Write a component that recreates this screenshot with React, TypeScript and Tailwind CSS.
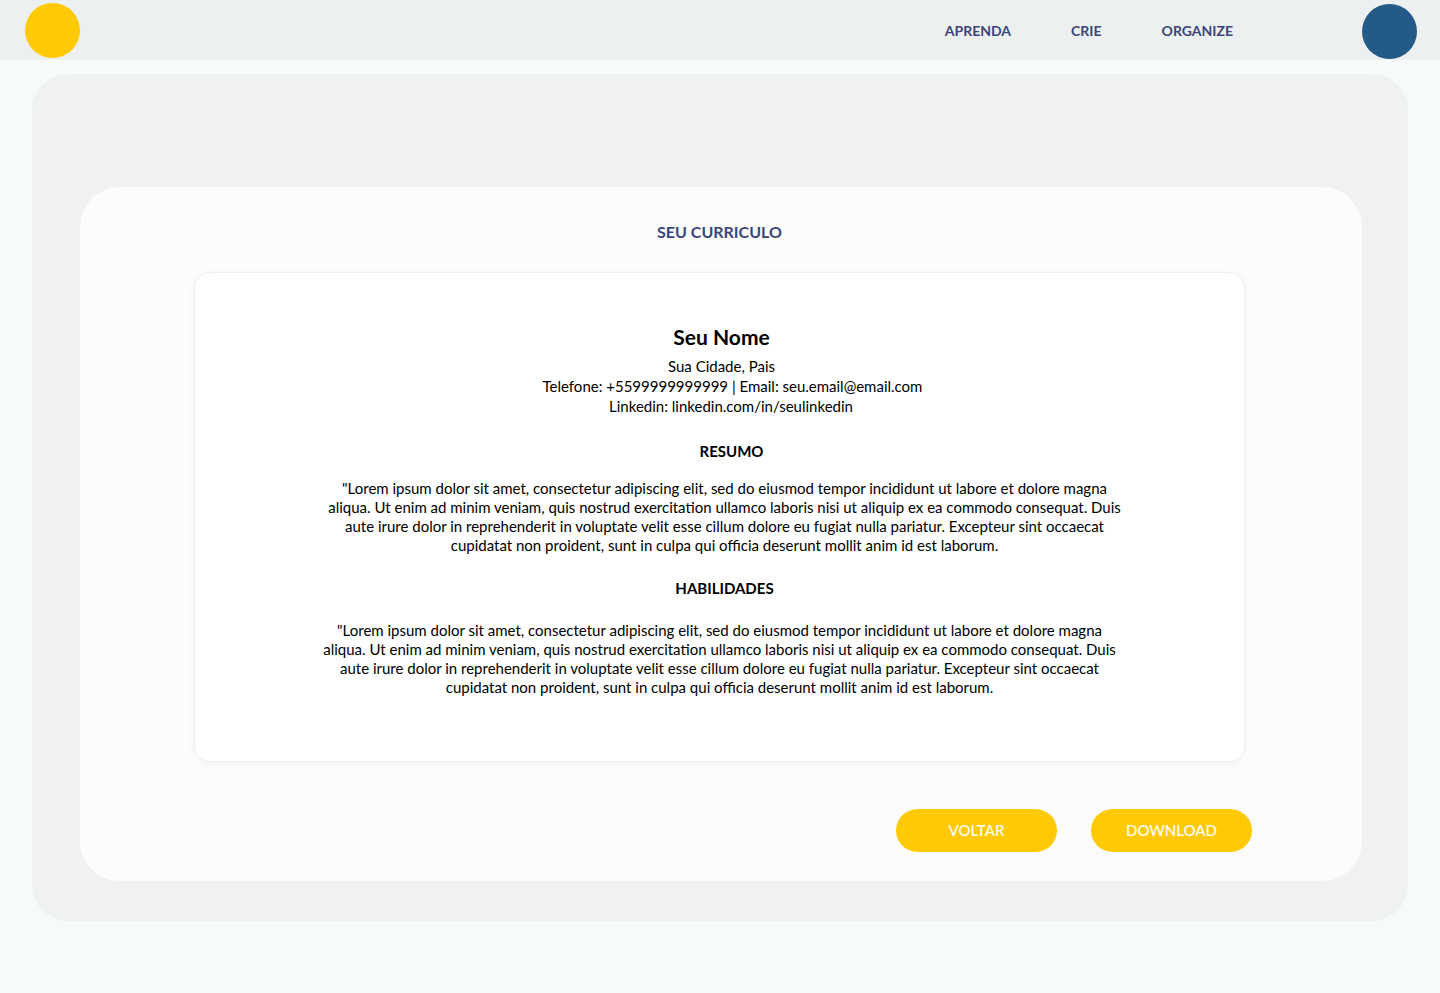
import React from 'react';

const lorem =
  '"Lorem ipsum dolor sit amet, consectetur adipiscing elit, sed do eiusmod tempor incididunt ut labore et dolore magna aliqua. Ut enim ad minim veniam, quis nostrud exercitation ullamco laboris nisi ut aliquip ex ea commodo consequat. Duis aute irure dolor in reprehenderit in voluptate velit esse cillum dolore eu fugiat nulla pariatur. Excepteur sint occaecat cupidatat non proident, sunt in culpa qui officia deserunt mollit anim id est laborum.';

const navLinks = ['APRENDA', 'CRIE', 'ORGANIZE'];

const App: React.FC = () => {
  return (
    <div className="min-h-screen bg-[#f6fafb] font-['Lato',sans-serif] pb-[73px]">
      {/* Header */}
      <header className="h-[60px] bg-[#edf0f1] flex items-center justify-between pl-[25px] pr-[23px]">
        <div className="w-[55px] h-[55px] rounded-full bg-[#ffc904]" />
        <div className="flex items-center">
          <nav className="flex items-center gap-[60px] mr-[129px]">
            {navLinks.map((link) => (
              <a key={link} href="#" className="text-[14px] font-bold text-[#3b4577]">
                {link}
              </a>
            ))}
          </nav>
          <div className="w-[55px] h-[55px] rounded-full bg-[#235a87] mt-[2px]" />
        </div>
      </header>

      {/* Outer panel */}
      <main className="mx-[32px] mt-[14px] bg-[#f0f2f2] rounded-[36px] pl-[48px] pr-[46px] pt-[113px] pb-[40px]">
        <section className="bg-[#fcfcfc] rounded-[40px] pl-[114px] pr-[117px] pt-[33px] pb-[29px]">
          <h1 className="text-center text-[16px] font-bold text-[#3b4577] mb-[28px]">SEU CURRICULO</h1>

          {/* Resume */}
          <div className="bg-white rounded-[16px] border border-[#eeeff3] shadow-[0_2px_10px_rgba(0,0,0,0.04)] pt-[51px] pb-[64px] text-black">
            <div className="text-center">
              <h2 className="text-[21px] font-bold leading-[26px] ml-[4px]">Seu Nome</h2>
              <p className="text-[15px] leading-[20px] mt-[6px] ml-[4px]">Sua Cidade, Pais</p>
              <p className="text-[15px] leading-[21px] ml-[26px]">Telefone: +5599999999999 | Email: seu.email@email.com</p>
              <p className="text-[15px] leading-[19px] ml-[23px]">Linkedin: linkedin.com/in/seulinkedin</p>
            </div>

            <h3 className="text-center text-[15px] font-bold mt-[24px] ml-[24px]">RESUMO</h3>
            <p className="text-center text-[15px] leading-[19px] max-w-[810px] mx-auto mt-[16px] pl-[10px]">{lorem}</p>

            <h3 className="text-center text-[15px] font-bold mt-[22px] ml-[10px]">HABILIDADES</h3>
            <p className="text-center text-[15px] leading-[19px] max-w-[800px] mx-auto mt-[22px]">{lorem}</p>
          </div>

          <div className="flex justify-end gap-[34px] mt-[47px] -mr-[7px]">
            <button className="w-[161px] h-[43px] rounded-full bg-[#ffc904] text-white text-[15px] font-medium">
              VOLTAR
            </button>
            <button className="w-[161px] h-[43px] rounded-full bg-[#ffc904] text-white text-[15px] font-medium">
              DOWNLOAD
            </button>
          </div>
        </section>
      </main>
    </div>
  );
};

export default App;
